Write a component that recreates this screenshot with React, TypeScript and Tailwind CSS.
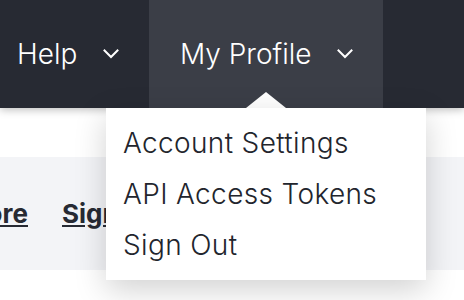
import React from "react";

const Chevron: React.FC = () => (
  <svg width="16" height="10" viewBox="0 0 16 10" fill="none" className="shrink-0">
    <path d="M1.5 1.5 8 8l6.5-6.5" stroke="white" strokeWidth="2" strokeLinecap="square" />
  </svg>
);

export default function App() {
  return (
    <div className="relative w-[464px] h-[300px] overflow-hidden bg-white font-['Inter',sans-serif]">
      <nav className="relative z-10 flex h-[108px] bg-[#272a33] shadow-[0_2px_8px_rgba(0,0,0,0.25)]">
        <div className="w-[149px] flex items-center gap-[26px] pl-[17px] text-[28px] font-light text-white">
          <span>Help</span>
          <Chevron />
        </div>
        <div className="relative flex items-center gap-[26px] w-[234px] pl-[31px] bg-[#3b3e47] text-[28px] font-light text-white">
          <span>My Profile</span>
          <Chevron />
          <div className="absolute bottom-0 left-[97px] w-0 h-0 border-x-[20px] border-x-transparent border-b-[16px] border-b-white" />
        </div>
      </nav>

      <div className="mt-[49px] h-[113px] bg-[#f3f4f7] flex items-center text-[26px] font-bold text-[#272a33]">
        <div className="w-[28px] flex justify-end">
          <a className="underline whitespace-nowrap">Explore</a>
        </div>
        <a className="ml-[34px] underline whitespace-nowrap">Sign Up</a>
      </div>

      <div className="absolute left-[106px] top-[108px] z-20 w-[320px] h-[172px] bg-white shadow-[0_10px_30px_rgba(0,0,0,0.18)] pt-[9px] px-[17px] text-[28px] font-light tracking-[0.35px] text-[#22252d]">
        <div className="h-[51px] flex items-center">Account Settings</div>
        <div className="h-[51px] flex items-center">API Access Tokens</div>
        <div className="h-[51px] flex items-center">Sign Out</div>
      </div>
    </div>
  );
}
